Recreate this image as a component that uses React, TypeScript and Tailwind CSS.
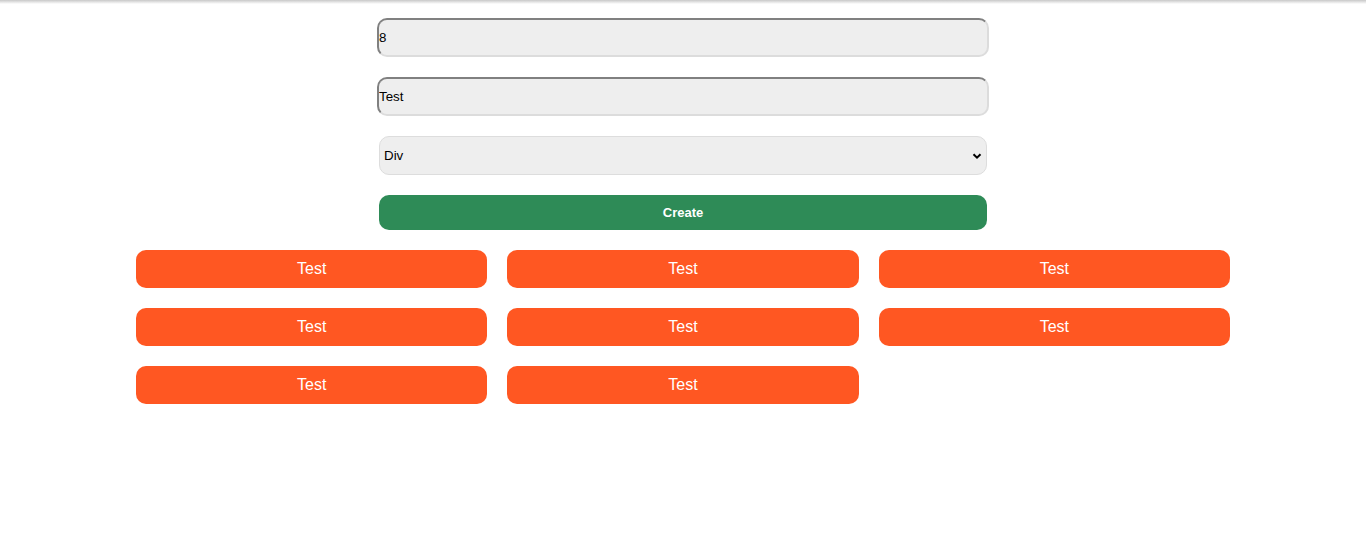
import React from "react";

export default function App() {
  const items = Array.from({ length: 8 }, (_, i) => i);
  return (
    <div className="relative min-h-[550px] bg-white" style={{ fontFamily: '"Liberation Sans", Arial, sans-serif' }}>
      <div className="pointer-events-none absolute left-0 right-0 top-0 h-[4px] bg-gradient-to-b from-[#c8c8c8] to-[#ffffff00]" />
      <div className="flex flex-col items-center gap-5 pt-[18px]">
        <input
          readOnly
          value="8"
          className="box-border h-[39px] w-[612px] rounded-[10px] border-2 border-solid border-t-[#808080] border-l-[#808080] border-b-[#dcdcdc] border-r-[#dcdcdc] bg-[#eeeeee] p-0 text-[13.33px] text-black outline-none"
        />
        <input
          readOnly
          value="Test"
          className="box-border h-[39px] w-[612px] rounded-[10px] border-2 border-solid border-t-[#808080] border-l-[#808080] border-b-[#dcdcdc] border-r-[#dcdcdc] bg-[#eeeeee] p-0 text-[13.33px] text-black outline-none"
        />
        <div className="relative box-border flex h-[39px] w-[608px] items-center rounded-[10px] border border-[#dddddd] bg-[#eeeeee] pl-[4px] text-[13.33px] text-black">
          <span>Div</span>
          <svg className="absolute right-[4px] top-1/2 -translate-y-1/2" width="10" height="10" viewBox="0 0 10 10">
            <path d="M1.5 3.2 L5 6.7 L8.5 3.2" fill="none" stroke="#000" strokeWidth="2" />
          </svg>
        </div>
        <div className="flex h-[35px] w-[608px] items-center justify-center rounded-[10px] bg-[#2e8b57] text-[13px] font-bold text-white">
          Create
        </div>
        <div className="grid w-[1094px] grid-cols-3 gap-5">
          {items.map((i) => (
            <div
              key={i}
              className="flex h-[38px] items-center justify-center rounded-[10px] bg-[#ff5722] text-[16px] text-white"
            >
              Test
            </div>
          ))}
        </div>
      </div>
    </div>
  );
}
